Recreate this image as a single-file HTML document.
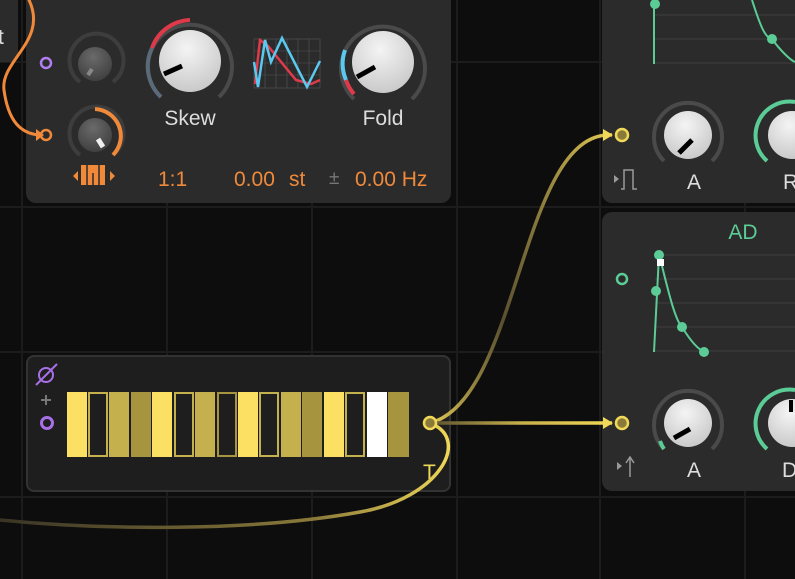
<!DOCTYPE html>
<html><head><style>
html,body{margin:0;padding:0;background:#0d0d0d;width:795px;height:579px;overflow:hidden}
svg{position:absolute;left:0;top:0}
text{font-family:"Liberation Sans",sans-serif}
</style></head><body>
<svg width="795" height="579" viewBox="0 0 795 579">
<defs>
<radialGradient id="kw" cx="0.45" cy="0.3" r="0.8"><stop offset="0" stop-color="#f4f4f4"/><stop offset="1" stop-color="#c4c4c4"/></radialGradient>
<radialGradient id="kd" cx="0.45" cy="0.3" r="0.8"><stop offset="0" stop-color="#6a6a6a"/><stop offset="1" stop-color="#3a3a3a"/></radialGradient>
<linearGradient id="cy1" gradientUnits="userSpaceOnUse" x1="430" y1="0" x2="612" y2="0"><stop offset="0" stop-color="#e8cf55"/><stop offset="0.4" stop-color="#5a5030"/><stop offset="1" stop-color="#e8cf55"/></linearGradient>
<linearGradient id="cy2" gradientUnits="userSpaceOnUse" x1="430" y1="0" x2="612" y2="0"><stop offset="0" stop-color="#5a5030"/><stop offset="0.5" stop-color="#c8b04a"/><stop offset="1" stop-color="#f0d858"/></linearGradient>
<linearGradient id="cy3" gradientUnits="userSpaceOnUse" x1="0" y1="0" x2="450" y2="0"><stop offset="0" stop-color="#3a3425"/><stop offset="0.7" stop-color="#8a7a3a"/><stop offset="1" stop-color="#f0d858"/></linearGradient>
</defs>
<g stroke="#1c1c1c" stroke-width="2">
<path d="M22 0V579M167 0V579M312 0V579M457 0V579M600 0V579M745 0V579M0 62H795M0 207H795M0 352H795M0 497H795"/>
</g>
<rect x="-10" y="-10" width="28" height="72" rx="8" fill="#2b2b2b"/>
<text x="-2" y="44" font-size="21" fill="#ddd">t</text>
<rect x="26" y="-20" width="425" height="223" rx="10" fill="#2b2b2b"/>
<path d="M80 82 A27 27 0 1 1 113 82" fill="none" stroke="#3d3d3d" stroke-width="4"/>
<circle cx="95" cy="64" r="17" fill="url(#kd)"/>
<line x1="92" y1="69" x2="88" y2="75" stroke="#888" stroke-width="4"/>
<path d="M80 155 A27 27 0 1 1 113 155" fill="none" stroke="#3d3d3d" stroke-width="4"/>
<path d="M95 109 A27 27 0 0 1 113 155" fill="none" stroke="#f0893a" stroke-width="4"/>
<circle cx="95" cy="135" r="17" fill="url(#kd)"/>
<line x1="98" y1="139" x2="103" y2="147" stroke="#f0f0f0" stroke-width="5"/>
<circle cx="46" cy="63" r="5" fill="none" stroke="#b07ef0" stroke-width="2.5"/>
<circle cx="46" cy="135" r="5" fill="none" stroke="#f0893a" stroke-width="2.5"/>
<g fill="#f0893a"><path d="M73 176l5-5v10z"/><path d="M115 176l-5-5v10z"/>
<rect x="81" y="165" width="24" height="20"/></g>
<g stroke="#2b2b2b" stroke-width="1.5"><path d="M87 165v20M93 173v12M99 165v20"/></g>
<path d="M28 -2 C50 40 0 60 4 90 C8 120 20 134 40 135" fill="none" stroke="#f0893a" stroke-width="3"/>
<path d="M36 129l8 6-8 6z" fill="#f0893a"/>
<path d="M161 97 A42 42 0 1 1 219 97" fill="none" stroke="#4a4a4a" stroke-width="4"/>
<path d="M152 48 A42 42 0 0 1 190 20" fill="none" stroke="#e03a4a" stroke-width="4"/>
<path d="M161 97 A42 42 0 0 1 152 48" fill="none" stroke="#5a6a78" stroke-width="4"/>
<circle cx="190" cy="61" r="31" fill="url(#kw)"/>
<line x1="182" y1="66" x2="164" y2="74" stroke="#000" stroke-width="5"/>
<text x="190" y="125" font-size="21" fill="#ddd" text-anchor="middle">Skew</text>
<g stroke="#555" stroke-width="0.6" fill="none"><rect x="254" y="39" width="66" height="49"/><path d="M254 51H320M254 63H320M254 75H320M265 39V88M276 39V88M287 39V88M298 39V88M309 39V88"/></g>
<path d="M255 84 L260 40 L268 46 L296 80 L311 84 L320 80" fill="none" stroke="#e03a4a" stroke-width="2.5"/>
<path d="M254 62 L258 87 L265 40 L271 62 L282 38 L307 87 L320 61" fill="none" stroke="#5bc8f0" stroke-width="2.5"/>
<path d="M354 99 A42 42 0 1 1 412 99" fill="none" stroke="#4a4a4a" stroke-width="4"/>
<path d="M345 50 A42 42 0 0 0 346 80" fill="none" stroke="#5bc8f0" stroke-width="4"/>
<path d="M346 80 A42 42 0 0 0 354 94" fill="none" stroke="#e03a4a" stroke-width="4"/>
<circle cx="383" cy="62" r="31" fill="url(#kw)"/>
<line x1="375" y1="67" x2="357" y2="77" stroke="#000" stroke-width="5"/>
<text x="383" y="125" font-size="21" fill="#ddd" text-anchor="middle">Fold</text>
<g font-size="21" fill="#f0893a"><text x="158" y="186">1:1</text><text x="234" y="186">0.00</text><text x="289" y="186">st</text><text x="355" y="186">0.00 Hz</text></g>
<text x="329" y="184" font-size="19" fill="#777">±</text>
<rect x="602" y="-20" width="220" height="223" rx="10" fill="#2b2b2b"/>
<rect x="602" y="212" width="220" height="279" rx="10" fill="#2b2b2b"/>
<g stroke="#3f3f3f" stroke-width="1"><path d="M655 15H795M655 39H795M655 63H795"/><path d="M655 255H795M655 279H795M655 303H795M655 327H795M655 351H795"/></g>
<path d="M654 64V0M752 0 C760 25 765 38 772 39 C780 50 790 60 795 62" fill="none" stroke="#5ccc96" stroke-width="2"/>
<circle cx="655" cy="4" r="5" fill="#5ccc96"/><circle cx="772" cy="39" r="5" fill="#5ccc96"/>
<text x="743" y="239" font-size="21" fill="#5ccc96" text-anchor="middle">AD</text>
<path d="M654 352L659 255L661 262 C668 290 675 320 682 327 C690 340 698 350 705 352" fill="none" stroke="#5ccc96" stroke-width="2"/>
<circle cx="659" cy="255" r="5" fill="#5ccc96"/><rect x="657" y="259" width="7" height="7" fill="#fff"/>
<circle cx="656" cy="291" r="5" fill="#5ccc96"/><circle cx="682" cy="327" r="5" fill="#5ccc96"/><circle cx="704" cy="352" r="5" fill="#5ccc96"/>
<circle cx="622" cy="279" r="5" fill="none" stroke="#5ccc96" stroke-width="2.5"/>
<path d="M664 161 A34 34 0 1 1 712 161" fill="none" stroke="#4a4a4a" stroke-width="4"/>
<circle cx="688" cy="135" r="24" fill="url(#kw)"/>
<line x1="692" y1="140" x2="679" y2="153" stroke="#000" stroke-width="5"/>
<text x="694" y="189" font-size="21" fill="#ddd" text-anchor="middle">A</text>
<path d="M767 161 A34 34 0 0 1 795 102" fill="none" stroke="#5ccc96" stroke-width="4"/>
<circle cx="792" cy="135" r="24" fill="url(#kw)"/>
<text x="783" y="189" font-size="21" fill="#ddd">R</text>
<path d="M664 449 A34 34 0 1 1 712 449" fill="none" stroke="#4a4a4a" stroke-width="4"/>
<path d="M664 449 A34 34 0 0 1 660 441" fill="none" stroke="#5ccc96" stroke-width="4"/>
<circle cx="688" cy="423" r="24" fill="url(#kw)"/>
<line x1="690" y1="429" x2="674" y2="438" stroke="#000" stroke-width="5"/>
<text x="694" y="477" font-size="21" fill="#ddd" text-anchor="middle">A</text>
<path d="M767 449 A34 34 0 0 1 795 390" fill="none" stroke="#5ccc96" stroke-width="4"/>
<circle cx="792" cy="423" r="24" fill="url(#kw)"/>
<line x1="791" y1="400" x2="791" y2="412" stroke="#000" stroke-width="4"/>
<text x="782" y="477" font-size="21" fill="#ddd">D</text>
<path d="M614 175l5 4-5 4z" fill="#999"/><path d="M621 189h3v-19h9v19h4" fill="none" stroke="#999" stroke-width="1.5"/>
<path d="M617 462l5 4-5 4z" fill="#999"/><path d="M630 477V458M626 463l4-6 4 6" fill="none" stroke="#999" stroke-width="1.5"/>
<rect x="27" y="356" width="423" height="135" rx="7" fill="#1e1e1e" stroke="#333" stroke-width="2"/>
<circle cx="46" cy="375" r="7" fill="none" stroke="#a870e8" stroke-width="2"/><line x1="36" y1="385" x2="57" y2="364" stroke="#a870e8" stroke-width="2"/>
<path d="M41 400h10M46 395v10" stroke="#777" stroke-width="2"/>
<circle cx="47" cy="423" r="5.5" fill="none" stroke="#a870e8" stroke-width="3"/>
<g>
<rect x="67" y="392" width="20" height="65" fill="#fbe063"/>
<rect x="89" y="393" width="18" height="63" fill="#1e1e1e" stroke="#c4b14e" stroke-width="2"/>
<rect x="109" y="392" width="20" height="65" fill="#c4b14e"/>
<rect x="131" y="392" width="20" height="65" fill="#a6953e"/>
<rect x="152" y="392" width="20" height="65" fill="#fbe063"/>
<rect x="175" y="393" width="18" height="63" fill="#1e1e1e" stroke="#c4b14e" stroke-width="2"/>
<rect x="195" y="392" width="20" height="65" fill="#c4b14e"/>
<rect x="218" y="393" width="18" height="63" fill="#1e1e1e" stroke="#a6953e" stroke-width="2"/>
<rect x="238" y="392" width="20" height="65" fill="#fbe063"/>
<rect x="260" y="393" width="18" height="63" fill="#1e1e1e" stroke="#c4b14e" stroke-width="2"/>
<rect x="281" y="392" width="20" height="65" fill="#c4b14e"/>
<rect x="302" y="392" width="20" height="65" fill="#a6953e"/>
<rect x="324" y="392" width="20" height="65" fill="#fbe063"/>
<rect x="346" y="393" width="18" height="63" fill="#1e1e1e" stroke="#c4b14e" stroke-width="2"/>
<rect x="367" y="392" width="20" height="65" fill="#ffffff"/>
<rect x="388" y="392" width="21" height="65" fill="#a6953e"/>
</g>
<text x="423" y="479" font-size="21" fill="#f0d858">T</text>
<path d="M430 423 C520 400 520 130 612 135" fill="none" stroke="url(#cy1)" stroke-width="3.5"/>
<path d="M603 129l10 6-10 6z" fill="#f0d858"/>
<path d="M430 423 H612" fill="none" stroke="url(#cy2)" stroke-width="3.5"/>
<path d="M603 417l10 6-10 6z" fill="#f0d858"/>
<path d="M0 520 C100 530 250 532 360 512 C440 498 470 440 432 424" fill="none" stroke="url(#cy3)" stroke-width="3.5"/>
<circle cx="430" cy="423" r="6" fill="#8a7a3a" stroke="#f0d858" stroke-width="2.5"/>
<circle cx="622" cy="135" r="6" fill="#8a7a3a" stroke="#f0d858" stroke-width="2.5"/>
<circle cx="622" cy="423" r="6" fill="#8a7a3a" stroke="#f0d858" stroke-width="2.5"/>
</svg>
</body></html>
